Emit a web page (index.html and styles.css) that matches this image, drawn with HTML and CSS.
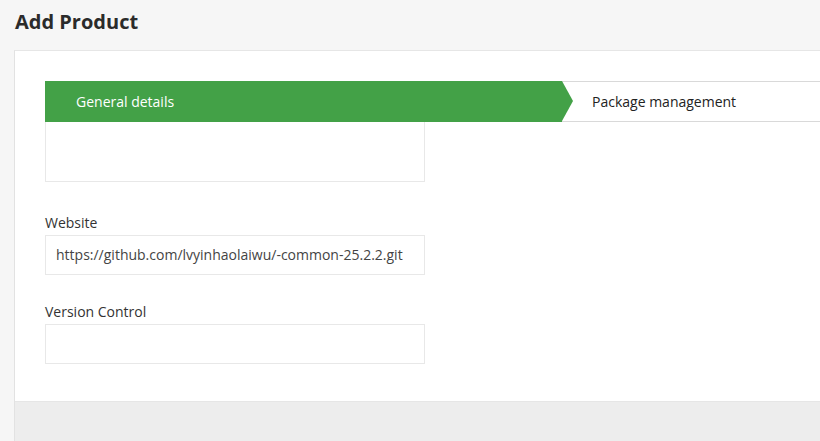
FILE: index.html
```html
<!DOCTYPE html>
<html>
<head>
<meta charset="utf-8">
<link rel="stylesheet" href="styles.css">
</head>
<body>
<h1 class="title">Add Product</h1>
<div class="card">
  <div class="card-body">
    <div class="steps">
      <div class="step step-active">General details<span class="arrow"></span></div>
      <div class="step step-next">Package management</div>
    </div>
    <div class="field-top"></div>
    <div class="field field-first">
      <label class="label">Website</label>
      <div class="input">https://github.com/lvyinhaolaiwu/-common-25.2.2.git</div>
    </div>
    <div class="field">
      <label class="label">Version Control</label>
      <div class="input"></div>
    </div>
  </div>
  <div class="card-footer"></div>
</div>
</body>
</html>
```
FILE: styles.css
```css
html, body {
  margin: 0;
  padding: 0;
  height: 100%;
}
body {
  background: #f6f6f6;
  font-family: "Open Sans", "Liberation Sans", sans-serif;
  color: #333;
  overflow: hidden;
}
.title {
  margin: 0;
  padding: 10px 0 0 15px;
  height: 40px;
  box-sizing: border-box;
  font-size: 20px;
  line-height: 24px;
  font-weight: 700;
  color: #2b2b2b;
}
.card {
  margin-left: 14px;
  border-left: 1px solid #e2e2e2;
  border-top: 1px solid #e6e6e6;
  background: #fff;
  margin-top: 10px;
}
.card-body {
  padding: 30px 0 37px 30px;
}
.steps {
  display: flex;
  height: 41px;
}
.step {
  display: flex;
  align-items: center;
  font-size: 14px;
  box-sizing: border-box;
  height: 41px;
}
.step-active {
  position: relative;
  width: 517px;
  background: #43a147;
  color: #fff;
  padding-left: 31px;
}
.arrow {
  position: absolute;
  right: -11px;
  top: 0;
  width: 0;
  height: 0;
  border-top: 20.5px solid transparent;
  border-bottom: 20.5px solid transparent;
  border-left: 11px solid #43a147;
}
.step-next {
  flex: 1;
  border-top: 1px solid #d9d9d9;
  border-bottom: 1px solid #d9d9d9;
  padding-left: 30px;
  color: #222;
}
.field-top {
  width: 380px;
  height: 60px;
  box-sizing: border-box;
  border: 1px solid #e8e8e8;
  border-top: none;
}
.field {
  display: flex;
  flex-direction: column;
  margin-top: 27px;
}
.field-first {
  margin-top: 31px;
}
.label {
  display: block;
  font-size: 14px;
  line-height: 20px;
  margin-bottom: 2px;
  color: #333;
}
.input {
  width: 380px;
  height: 40px;
  box-sizing: border-box;
  border: 1px solid #e8e8e8;
  padding: 0 10px;
  font-size: 14px;
  line-height: 38px;
  color: #444;
  white-space: nowrap;
  overflow: hidden;
}
.card-footer {
  background: #ededed;
  border-top: 1px solid #e6e6e6;
  height: 60px;
}
```
